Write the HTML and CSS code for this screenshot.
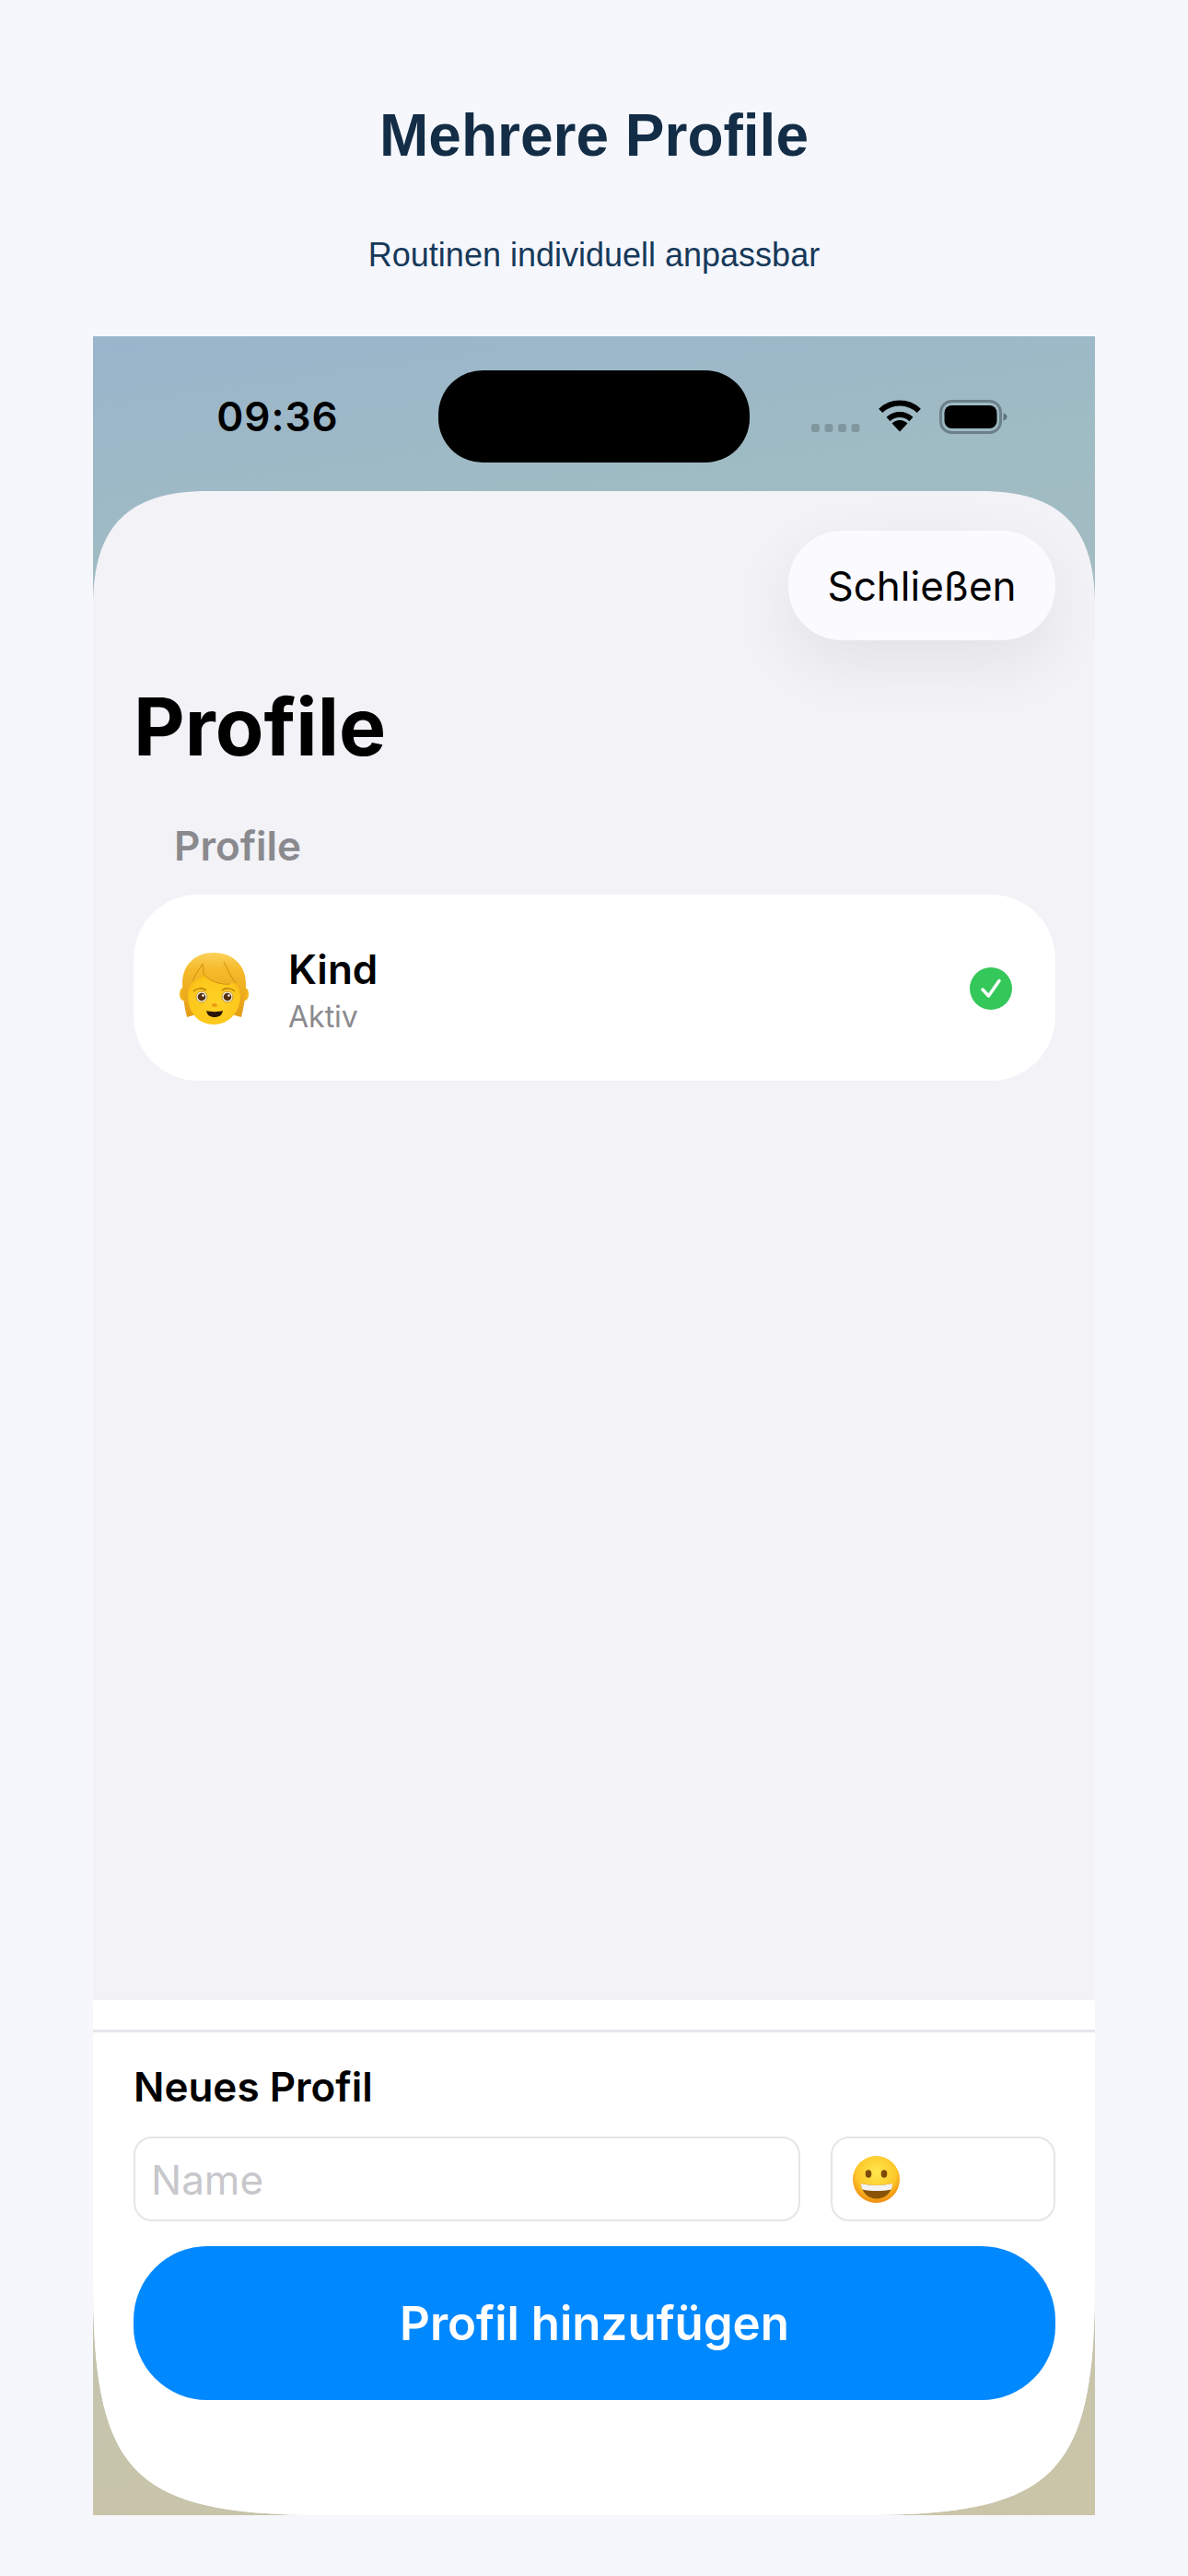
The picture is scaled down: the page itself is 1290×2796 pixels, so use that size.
FILE: index.html
```html
<!DOCTYPE html>
<html lang="de">
<head>
    <meta charset="UTF-8">
    <meta name="viewport" content="width=device-width, initial-scale=1.0">
    <title>Mehrere Profile</title>
    <link rel="stylesheet" href="styles.css">
</head>
<body>

<div class="page">
    <h1 class="page-title">Mehrere Profile</h1>
    <p class="page-subtitle">Routinen individuell anpassbar</p>

    <div class="phone">
        <div class="status-bar">
            <div class="status-left"><span class="time">09:36</span></div>
            <div class="island"></div>
            <div class="status-right">
                <svg class="status-icons" width="213" height="37" viewBox="0 0 213 37">
                    <rect x="0" y="26" width="9" height="9" rx="3" fill="#7f979f"/>
                    <rect x="14.5" y="26" width="9" height="9" rx="3" fill="#7f979f"/>
                    <rect x="29" y="26" width="9" height="9" rx="3" fill="#7f979f"/>
                    <rect x="43.5" y="26" width="9" height="9" rx="3" fill="#7f979f"/>
                    <path d="M75.2 11.8 A30 30 0 0 1 116.8 11.8" fill="none" stroke="#000" stroke-width="6"/>
                    <path d="M83.6 21 A18 18 0 0 1 108.4 21" fill="none" stroke="#000" stroke-width="6"/>
                    <path d="M96 34.5 L87.5 25.5 A12 12 0 0 1 104.5 25.5 Z" fill="#000"/>
                    <rect x="140.5" y="1.5" width="65" height="34" rx="12" fill="none" stroke="#6b8088" stroke-width="3"/>
                    <rect x="144.5" y="6" width="57" height="25" rx="8" fill="#000"/>
                    <path d="M208.500 14.500 C211.500 15.500 212.500 17 212.500 18.500 C212.500 20 211.500 21.500 208.500 22.500 Z" fill="#5f747c"/>
                </svg>
            </div>
        </div>

        <div class="sheet">
            <div class="sheet-main">
                <div class="sheet-top">
                    <button class="close-btn">Schließen</button>
                </div>
                <h2 class="sheet-title">Profile</h2>
                <div class="section-label">Profile</div>
                <div class="profile-card">
                    <svg class="child-emoji" width="75" height="78" viewBox="0 0 75 78">
                        <defs>
                            <linearGradient id="hairGrad" x1="0" y1="0" x2="0" y2="1">
                                <stop offset="0" stop-color="#fbd25a"/>
                                <stop offset="0.25" stop-color="#f6bb2c"/>
                                <stop offset="1" stop-color="#e49c14"/>
                            </linearGradient>
                            <radialGradient id="faceGrad" cx="0.5" cy="0.55" r="0.6">
                                <stop offset="0" stop-color="#ffd225"/>
                                <stop offset="0.8" stop-color="#fcc71a"/>
                                <stop offset="1" stop-color="#f5b310"/>
                            </radialGradient>
                        </defs>
                        <ellipse cx="4" cy="45" rx="4" ry="7" fill="#f3b31c"/>
                        <ellipse cx="71" cy="45" rx="4" ry="7" fill="#f3b31c"/>
                        <path d="M37 0 C17 0 3 13 3 34 C3 46 5 58 8 70 L22 66 L53 66 L67 70 C70 58 72 46 72 34 C72 13 57 0 37 0 Z" fill="url(#hairGrad)"/>
                        <path d="M37 78 C20 78 9 64 9 47 C9 41 11 35 14 31 C18 31 22 28 26 23 C33 31 46 35 61 33 C64 37 66 42 66 47 C66 64 54 78 37 78 Z" fill="url(#faceGrad)"/>
                        <path d="M25 12 C26 16 26 20 26 23 C32 31 44 35 55 34 M48 10 C52 18 56 27 61 33 M14 31 C16 26 20 20 25 12" fill="none" stroke="#cf8a10" stroke-width="1"/>
                        <path d="M15 42 C19 38 25 38 29 41 M46 41 C50 38 56 38 60 42" fill="none" stroke="#b47a10" stroke-width="1.500"/>
                        <circle cx="24" cy="48" r="6" fill="#f6f2e2" stroke="#c59a2e" stroke-width="1"/>
                        <circle cx="24" cy="48" r="4.300" fill="#55300c"/>
                        <circle cx="25.500" cy="46.500" r="1.300" fill="#fff"/>
                        <circle cx="52" cy="48" r="6" fill="#f6f2e2" stroke="#c59a2e" stroke-width="1"/>
                        <circle cx="52" cy="48" r="4.300" fill="#55300c"/>
                        <circle cx="53.500" cy="46.500" r="1.300" fill="#fff"/>
                        <ellipse cx="38" cy="57" rx="3" ry="2" fill="#ee9f12"/>
                        <path d="M29 63 C33 64.500 43 64.500 47 63 C46 68 43 70 38 70 C33 70 30 68 29 63 Z" fill="#2b1606"/>
                    </svg>
                    <div class="profile-text">
                        <div class="profile-name">Kind</div>
                        <div class="profile-state">Aktiv</div>
                    </div>
                    <svg class="check-icon" width="46" height="46" viewBox="0 0 46 46">
                        <circle cx="23" cy="23" r="23" fill="#34c759"/>
                        <path d="M14 24 L20.500 31 L32 14.500" fill="none" stroke="#fff" stroke-width="3.500" stroke-linecap="round" stroke-linejoin="round"/>
                    </svg>
                </div>
            </div>

            <div class="sheet-footer">
                <div class="footer-inner">
                    <div class="footer-title">Neues Profil</div>
                    <div class="input-row">
                        <input class="name-input" type="text" placeholder="Name">
                        <div class="emoji-input">
                            <svg width="51" height="51" viewBox="0 0 51 51">
                                <defs>
                                    <radialGradient id="grinGrad" cx="0.5" cy="0.35" r="0.65">
                                        <stop offset="0" stop-color="#ffe84d"/>
                                        <stop offset="0.65" stop-color="#fdc72a"/>
                                        <stop offset="1" stop-color="#f0890f"/>
                                    </radialGradient>
                                </defs>
                                <circle cx="25.500" cy="25.500" r="25.500" fill="url(#grinGrad)"/>
                                <ellipse cx="17" cy="19.500" rx="3.300" ry="4.200" fill="#7f4a08"/>
                                <ellipse cx="34" cy="19.500" rx="3.300" ry="4.200" fill="#7f4a08"/>
                                <path d="M9 30 C19 32.500 32 32.500 43 30 C42.500 40 35 46.500 26 46.500 C17 46.500 9.500 40 9 30 Z" fill="#8a5206"/>
                                <path d="M9 30 C19 32.500 32 32.500 43 30 C43 32 42.500 35 41.500 36.500 C32 38.500 20 38.500 10.500 36.500 C9.500 35 9 32 9 30 Z" fill="#f4f4f2"/>
                            </svg>
                        </div>
                    </div>
                    <button class="add-btn">Profil hinzufügen</button>
                </div>
            </div>
        </div>
    </div>
</div>

</body>
</html>
```

FILE: styles.css
```css
* {
    box-sizing: border-box;
}
body {
    margin: 0;
    background-color: #f5f7fc;
    font-family: Inter, "Noto Sans", sans-serif;
}
.page {
    width: 1290px;
    height: 2796px;
    padding: 110px 101px 0;
}
.page-title {
    margin: 0;
    font-family: "Liberation Sans", Arial, sans-serif;
    font-size: 64px;
    line-height: 74px;
    font-weight: 700;
    text-align: center;
    color: #132d46;
}
.page-subtitle {
    margin: 72px 0 0;
    font-family: "Liberation Sans", Arial, sans-serif;
    font-size: 36px;
    line-height: 42px;
    text-align: center;
    color: #17395a;
}
.phone {
    margin-top: 67px;
    width: 1088px;
    height: 2365px;
    background: linear-gradient(172deg, #9ab5cc 0%, #9fbbc3 10%, #b6c2b8 60%, #cbc5a8 100%);
}

/* status bar */
.status-bar {
    display: flex;
    align-items: center;
    height: 168px;
    padding: 37px 0 31px;
}
.status-left {
    width: 375px;
    display: flex;
    justify-content: center;
    padding-left: 26px;
}
.time {
    font-family: Inter, sans-serif;
    font-size: 44px;
    font-weight: 600;
    letter-spacing: 1px;
    color: #000;
}
.island {
    width: 338px;
    height: 100px;
    background-color: #000;
    border-radius: 48px;
}
.status-right {
    flex: 1;
    display: flex;
    padding-left: 67px;
}
.status-icons {
    display: block;
}

/* sheet */
.sheet {
    display: flex;
    flex-direction: column;
    height: 2197px;
    background-color: #f2f2f7;
    clip-path: path("M0 125 C0 38 38 0 125 0 L963 0 C1050 0 1088 38 1088 125 L1088 1942 C1088 2154 1045 2197 833 2197 L255 2197 C43 2197 0 2154 0 1942 Z");
}
.sheet-main {
    flex: 1;
    padding: 43px 43px 0 44px;
}
.sheet-top {
    display: flex;
    justify-content: flex-end;
}
.close-btn {
    width: 290px;
    height: 119px;
    padding: 0;
    border: none;
    border-radius: 58px;
    background-color: #fbfaff;
    box-shadow: 0 24px 70px rgba(0, 0, 0, 0.07);
    font-family: Inter, sans-serif;
    font-size: 44px;
    color: #000;
}
.sheet-title {
    margin: 38px 0 0;
    font-size: 86px;
    line-height: 112px;
    font-weight: 700;
    color: #000;
}
.section-label {
    margin: 46px 0 0 44px;
    font-size: 44px;
    line-height: 54px;
    font-weight: 600;
    color: #8a8a8e;
}
.profile-card {
    display: flex;
    align-items: center;
    height: 202px;
    margin-top: 26px;
    padding: 2px 47px 0 50px;
    background-color: #fff;
    border-radius: 70px;
}
.child-emoji {
    display: block;
    flex-shrink: 0;
}
.profile-text {
    flex: 1;
    margin-left: 43px;
    padding-top: 3px;
}
.profile-name {
    font-size: 44px;
    line-height: 54px;
    font-weight: 600;
    color: #000;
}
.profile-state {
    margin-top: 5px;
    font-size: 32px;
    line-height: 40px;
    color: #8a8a8e;
}
.check-icon {
    display: block;
}

/* footer */
.sheet-footer {
    height: 559px;
    padding-top: 32px;
    background-color: #fff;
}
.footer-inner {
    height: 100%;
    padding: 0 43px 0 44px;
    border-top: 3px solid #e5e5ea;
}
.footer-title {
    margin-top: 32px;
    font-size: 44px;
    line-height: 54px;
    font-weight: 600;
    color: #000;
}
.input-row {
    display: flex;
    gap: 33px;
    margin-top: 27px;
}
.name-input {
    width: 724px;
    height: 92px;
    padding: 2px 17px 0;
    border: 2px solid #e5e5ea;
    border-radius: 20px;
    outline: none;
    background: #fff;
    font-family: Inter, sans-serif;
    font-size: 44px;
}
.name-input::placeholder {
    color: #c7c7cc;
    opacity: 1;
}
.emoji-input {
    display: flex;
    align-items: center;
    flex: 1;
    height: 92px;
    padding: 0 0 0 22px;
    border: 2px solid #e5e5ea;
    border-radius: 20px;
    background: #fff;
}
.add-btn {
    display: block;
    width: 100%;
    height: 167px;
    margin-top: 27px;
    border: none;
    border-radius: 80px;
    background-color: #0088ff;
    font-family: Inter, sans-serif;
    font-size: 51px;
    font-weight: 600;
    color: #fff;
}
```
